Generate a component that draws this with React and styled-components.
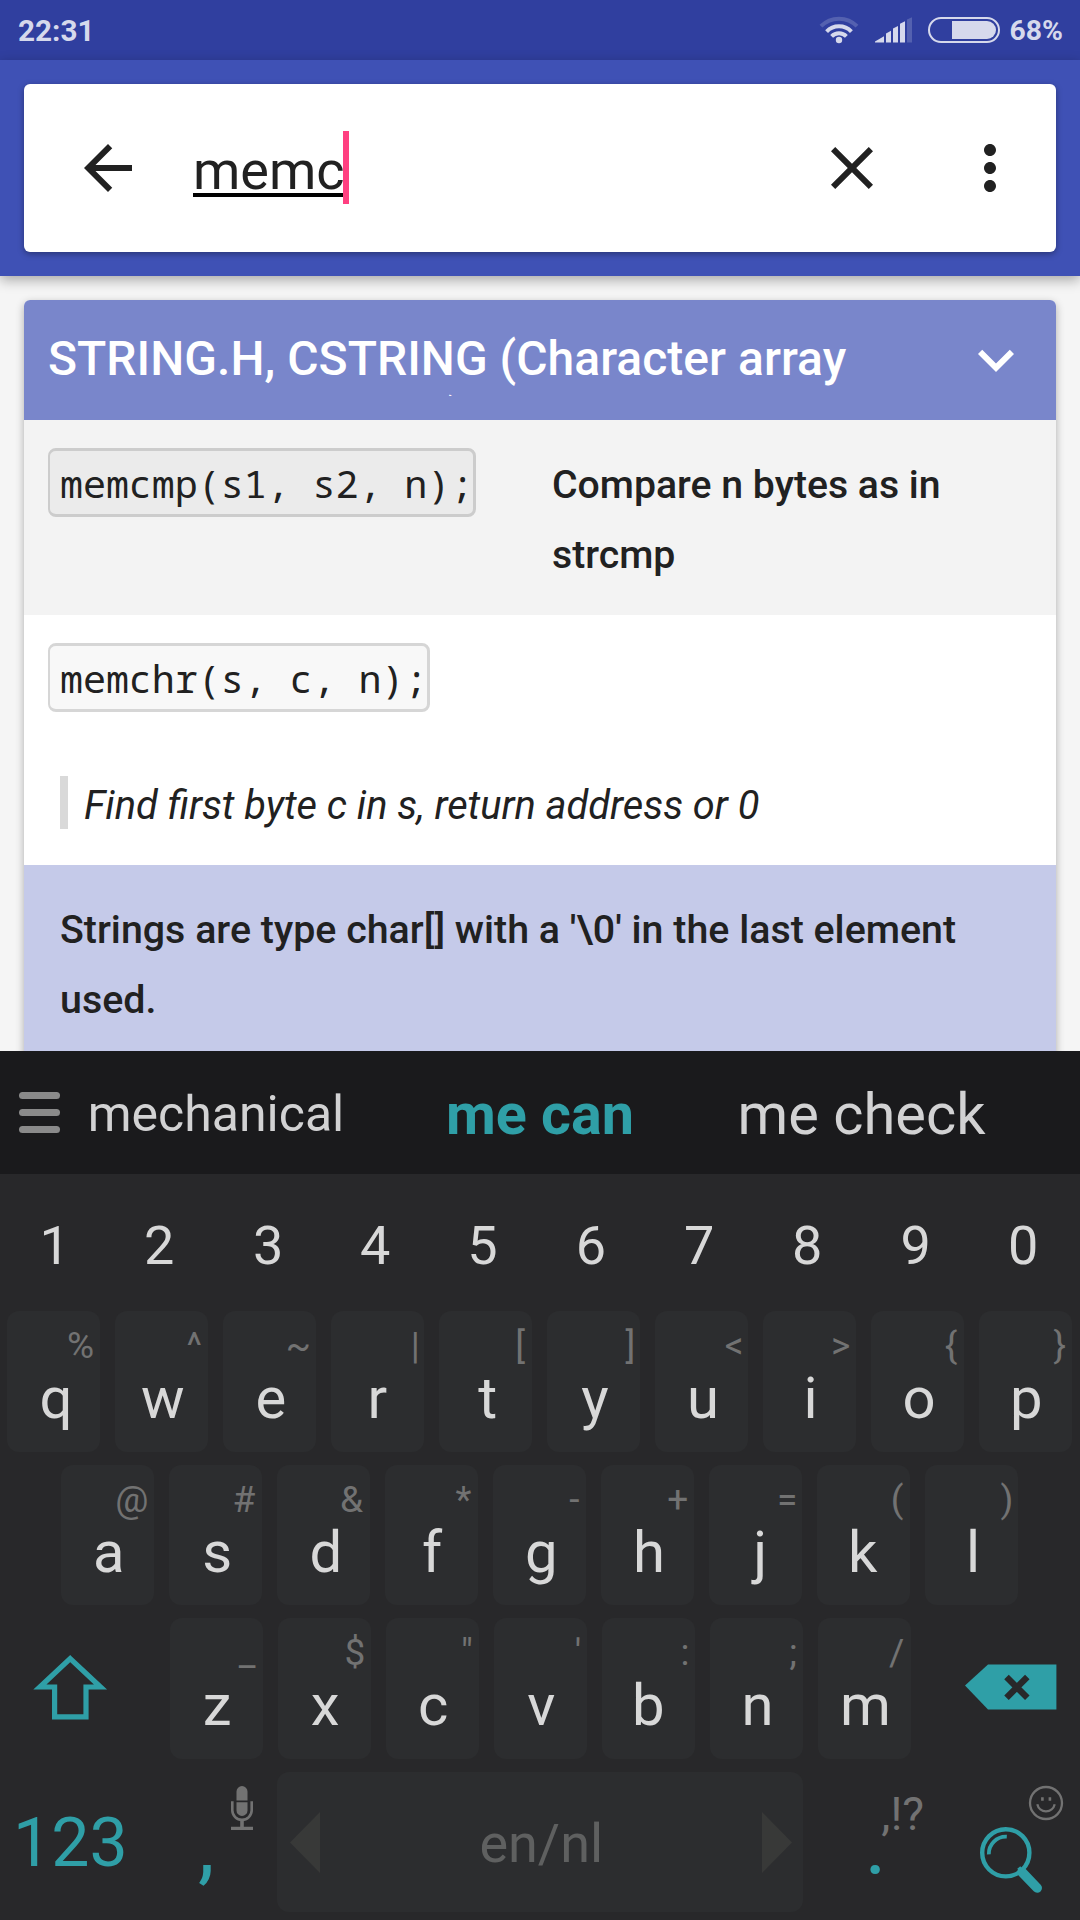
import React from "react";
import styled, { createGlobalStyle, css } from "styled-components";

const TEAL = "#2f9fa7";
const HINT = "#727272";

const GlobalStyle = createGlobalStyle`
  *, *::before, *::after { box-sizing: border-box; }
  body {
    margin: 0;
    background: #f5f5f5;
    font-family: Roboto, "Liberation Sans", sans-serif;
  }
  svg { display: block; flex: none; }
`;

const Screen = styled.div`
  width: 1080px;
  height: 1920px;
  display: flex;
  flex-direction: column;
  overflow: hidden;
`;

/* ---------- status bar ---------- */

const StatusBar = styled.header`
  flex: none;
  height: 60px;
  padding: 0 17px 0 18px;
  display: flex;
  align-items: center;
  background: #303f9f;
  color: #d6d9ec;
  font-weight: 700;
`;

const Clock = styled.span`
  flex: 1;
  font-size: 29.7px;
  line-height: 58px;
  padding-top: 2px;
`;

const StatusIcons = styled.div`
  display: flex;
  align-items: center;
  gap: 16px;
`;

const Battery = styled.div`
  width: 72px;
  height: 26px;
  padding: 2px;
  border: 2px solid #d6d9ec;
  border-radius: 13px;
  display: flex;
  justify-content: flex-end;
`;

const Charge = styled.div`
  width: 44px;
  height: 18px;
  border-radius: 0 9px 9px 0;
  background: #d6d9ec;
`;

const Percent = styled.span`
  font-size: 28.3px;
  line-height: 58px;
  padding-top: 2px;
  margin-left: -6.4px;
`;

/* ---------- app bar ---------- */

const AppBar = styled.div`
  flex: none;
  height: 216px;
  padding: 24px;
  background: #3f51b5;
  box-shadow: 0 4px 12px rgba(0, 0, 0, 0.32);
  z-index: 1;
`;

const SearchCard = styled.div`
  height: 168px;
  padding: 0 30px 0 48px;
  display: flex;
  align-items: center;
  border-radius: 6px;
  background: #fff;
  box-shadow: 0 2px 6px rgba(0, 0, 0, 0.35);
`;

const Field = styled.div`
  flex: 1;
  margin-left: 49px;
  height: 74px;
  display: flex;
  align-items: center;
`;

const Query = styled.span`
  color: #212121;
  font-size: 54px;
  line-height: 74px;
  padding-top: 5px;
  text-decoration: underline #000;
  text-decoration-thickness: 4px;
  text-underline-offset: 4px;
  text-decoration-skip-ink: none;
`;

const Caret = styled.span`
  width: 6px;
  height: 73px;
  margin: 0 0 1px -2px;
  background: #ff4081;
`;

const Actions = styled.div`
  display: flex;
  gap: 66px;
`;

/* ---------- content ---------- */

const Content = styled.main`
  flex: none;
  height: 775px;
  padding: 24px 24px 0;
  overflow: hidden;
  background: #f5f5f5;
`;

const Card = styled.section`
  height: 800px;
  border-radius: 6px;
  background: #fff;
  overflow: hidden;
`;

const CardShadow = styled.div`
  border-radius: 6px;
  box-shadow: 0 3px 8px rgba(0, 0, 0, 0.3);
`;

const CardHeader = styled.div`
  height: 120px;
  padding: 24px;
  display: flex;
  background: #7986cb;
`;

const Title = styled.h2`
  flex: 1;
  height: 72px;
  margin: 0;
  padding-top: 5.5px;
  overflow: hidden;
  color: #fff;
  font-size: 48px;
  font-weight: 500;
  letter-spacing: 0.03px;
  line-height: 58px;
`;

const ROW_TONES = { grey: "#f3f3f3", white: "#ffffff", indigo: "#c5cae9" };

const Row = styled.div`
  height: ${(p) => p.$height}px;
  padding: 28px 24px 0;
  background: ${(p) => ROW_TONES[p.$tone]};
  color: #212121;
  font-size: 39.3px;
  line-height: 70px;
`;

const Split = styled.div`
  display: grid;
  grid-template-columns: 504px 1fr;
  align-items: start;
`;

const Code = styled.code`
  display: inline-block;
  justify-self: start;
  height: 69px;
  padding: 1px 0 0 10px;
  border: 3px solid ${(p) => (p.$dark ? "#cccccc" : "#d6d6d6")};
  border-left-width: 2px;
  border-radius: 8px;
  background: ${(p) => (p.$dark ? "#ebebeb" : "#f8f8f8")};
  color: #212121;
  font-family: "Noto Sans Mono", "DejaVu Sans Mono", monospace;
  font-size: 38.4px;
  letter-spacing: -0.08px;
  line-height: 63px;
`;

const Meaning = styled.div`
  padding-top: 2px;
  font-size: 39.2px;
  font-weight: 500;
`;

const Quote = styled.blockquote`
  height: 53px;
  margin: 64px 0 0 12px;
  padding-left: 16px;
  border-left: 8px solid #d9d9d9;
  font-size: 39.77px;
  font-style: italic;
  line-height: 59px;
`;

const Note = styled.div`
  padding: 2px 0 0 12px;
  font-size: 39.37px;
  font-weight: 500;
`;

/* ---------- keyboard ---------- */

const Keyboard = styled.div`
  flex: 1;
  display: flex;
  flex-direction: column;
  background: #28282a;
  color: #d8d8d8;
  z-index: 2;
`;

const Suggestions = styled.div`
  flex: none;
  height: 123px;
  padding-left: 19px;
  display: flex;
  align-items: center;
  background: #1a1a1c;
`;

const Burger = styled.div`
  width: 41px;
  height: 41px;
  margin-bottom: 1px;
  display: flex;
  flex-direction: column;
  justify-content: space-between;
`;

const BurgerLine = styled.span`
  height: 7px;
  border-radius: 3.5px;
  background: #8a8a8a;
`;

const Suggestion = styled.span`
  width: ${(p) => p.$width}px;
  padding-top: 3px;
  text-align: center;
  font-size: 57.8px;
  line-height: 120px;
  color: #d2d2d3;
  ${(p) => p.$small && css`font-size: 50px; padding-left: 1px;`}
  ${(p) => p.$primary && css`padding-top: 5px; font-size: 57.5px; font-weight: 700; color: ${TEAL};`}
`;

const Digits = styled.div`
  flex: none;
  height: 137.3px;
  display: grid;
  grid-template-columns: repeat(10, 1fr);
`;

const Digit = styled.span`
  padding: 6px 5.4px 0 0;
  text-align: center;
  font-size: 54px;
  line-height: 131px;
`;

const KeyRow = styled.div`
  flex: none;
  height: 140.7px;
  margin-bottom: 12.8px;
  padding-left: ${(p) => p.$inset}px;
  display: flex;
  gap: 15px;
`;

const Key = styled.div`
  flex: none;
  width: ${(p) => p.$width || 93}px;
  height: 140.7px;
  border-radius: 12px;
  display: flex;
  flex-direction: column;
  background: ${(p) => (p.$plain ? "transparent" : "#2c2d2f")};
`;

const KeyHint = styled.span`
  align-self: flex-end;
  padding: 5px 7px 0 0;
  color: ${HINT};
  font-size: 37px;
  line-height: 60px;
`;

const KeyLabel = styled.span`
  padding-left: 2.7px;
  text-align: center;
  font-size: 58px;
  line-height: 44px;
`;

const ShiftKey = styled.div`
  width: 147.5px;
  padding: 36px 0 0 26px;
`;

const DeleteKey = styled.div`
  padding: 46px 0 0 39px;
`;

const ModeKey = styled.div`
  width: 154px;
  padding: 3px 0 0 6px;
  color: ${TEAL};
  font-size: 68px;
  line-height: 136px;
`;

const MicHint = styled.div`
  align-self: flex-end;
  padding: 14px 9px 0 0;
`;

const MarkHint = styled.span`
  align-self: flex-end;
  padding-top: 20px;
  margin-right: -13.5px;
  color: ${HINT};
  font-size: 46px;
  line-height: 44px;
`;

const Mark = styled.span`
  padding-left: ${(p) => p.$left}px;
  color: ${TEAL};
  font-size: 84px;
  line-height: ${(p) => p.$line}px;
`;

const SpaceKey = styled.div`
  flex: none;
  width: 525.5px;
  height: 140.7px;
  padding: 1px 10px 0 13px;
  border-radius: 12px;
  display: flex;
  align-items: center;
  justify-content: space-between;
  background: #2c2d2f;
  color: #5f6060;
  font-size: 54px;
`;

const SpaceLabel = styled.span`
  padding-top: 2px;
`;

const EnterKey = styled.div`
  margin-left: 38px;
  width: 104px;
  padding-top: 13.5px;
  display: flex;
  flex-direction: column;
`;

const Smile = styled.div`
  align-self: flex-end;
  margin-right: 4px;
`;

const Search = styled.div`
  margin: 5px 0 0 15px;
`;

const pen = document.createElement("canvas").getContext("2d");

function measure(char) {
  pen.font = "400px Roboto";
  const m = pen.measureText(char);
  return {
    right: (m.width - m.actualBoundingBoxRight) / 400,
    left: -m.actualBoundingBoxLeft / 400,
  };
}

/* Blank space a glyph carries on its right, so that every hint ends on the same edge. */
const rightBearing = (char, size) => measure(char).right * size;

/* Extra indent that puts the drawn glyph, not its advance box, in the middle of the key. */
function opticalIndent(char, size) {
  const { left, right } = measure(char);
  return (right - left) * size;
}

function CenteredGlyph({ as: Part, char, size }) {
  const shift = opticalIndent(char, size) / 2;
  return <Part style={{ transform: `translateX(${shift.toFixed(2)}px)` }}>{char}</Part>;
}

function LetterKey({ label, hint }) {
  return (
    <Key>
      <KeyHint style={{ marginRight: -rightBearing(hint, 37) }}>{hint}</KeyHint>
      <CenteredGlyph as={KeyLabel} char={label} size={58} />
    </Key>
  );
}

const TOP = [["q", "%"], ["w", "^"], ["e", "~"], ["r", "|"], ["t", "["], ["y", "]"], ["u", "<"], ["i", ">"], ["o", "{"], ["p", "}"]];
const HOME = [["a", "@"], ["s", "#"], ["d", "&"], ["f", "*"], ["g", "-"], ["h", "+"], ["j", "="], ["k", "("], ["l", ")"]];
const BOTTOM = [["z", "_"], ["x", "$"], ["c", '"'], ["v", "'"], ["b", ":"], ["n", ";"], ["m", "/"]];

const letters = (row) => row.map(([label, hint]) => <LetterKey key={label} label={label} hint={hint} />);

const MaterialIcon = ({ d, color = "#212121" }) => (
  <svg width="72" height="72" viewBox="0 0 24 24" fill={color}>
    <path d={d} />
  </svg>
);

const BACK = "M20 11H7.83l5.59-5.59L12 4l-8 8 8 8 1.41-1.41L7.83 13H20v-2z";
const CLOSE = "M19 6.41L17.59 5 12 10.59 6.41 5 5 6.41 10.59 12 5 17.59 6.41 19 12 13.41 17.59 19 19 17.59 13.41 12z";
const MORE = "M12 8c1.1 0 2-.9 2-2s-.9-2-2-2-2 .9-2 2 .9 2 2 2zm0 2c-1.1 0-2 .9-2 2s.9 2 2 2 2-.9 2-2-.9-2-2-2zm0 6c-1.1 0-2 .9-2 2s.9 2 2 2 2-.9 2-2-.9-2-2-2z";
const EXPAND = "M7.41 8.59L12 13.17l4.59-4.58L18 10l-6 6-6-6z";

const WifiIcon = () => (
  <svg width="40" height="30" viewBox="9 15 40 30" fill="none" stroke="#d6d9ec" strokeWidth="4">
    <path d="M11 26.2a25.2 25.2 0 0 1 36 0" strokeOpacity="0.22" />
    <path d="M16.6 31.6a17.3 17.3 0 0 1 24.8 0" />
    <path d="M21.6 36.4a10.4 10.4 0 0 1 14.8 0" />
    <circle cx="29" cy="40" r="3.2" fill="#d6d9ec" stroke="none" />
  </svg>
);

const SignalIcon = () => (
  <svg width="37" height="26" viewBox="66 17.5 37 26" fill="#d6d9ec">
    <path d="M66 43v-1l9-5.3V43z" />
    <path d="M77 43v-9l5-2.8V43z" />
    <path d="M84 43V29l5-2.6V43z" />
    <path d="M91 43V24.3l5-2.6V43z" />
    <path d="M98 43V20l5-2.3V43z" fillOpacity="0.22" />
  </svg>
);

const ShiftIcon = () => (
  <svg width="75" height="67" viewBox="0 0 75 67" fill="none" stroke={TEAL} strokeWidth="5.2">
    <path d="M37.2 4.6L67.5 33H53v29.8H21.6V33H6.9z" />
  </svg>
);

const DeleteIcon = () => (
  <svg width="92" height="46" viewBox="0 0 92 46">
    <path d="M0 21.6L23 .5H91.4V45.4H23z" fill={TEAL} />
    <path d="M41.5 13l20.8 20.8M62.3 13L41.5 33.8" stroke="#28282a" strokeWidth="6.4" />
  </svg>
);

const MicIcon = () => (
  <svg width="22" height="44" viewBox="0 0 22 44" fill={HINT}>
    <path d="M5.5 14.4V5.6a5.5 5.5 0 0 1 11 0v8.8zM5.5 16.2h11v8.2a5.5 5.5 0 0 1-11 0z" />
    <path d="M1.3 15.2v9a9.7 9.7 0 0 0 19.4 0v-9" fill="none" stroke={HINT} strokeWidth="2.6" />
    <path d="M9.2 33.5h3.6v7.3h9.2V44H0v-3.2h9.2z" />
  </svg>
);

const Triangle = ({ d }) => (
  <svg width="30" height="61" viewBox="0 0 30 61" fill="#383938">
    <path d={d} />
  </svg>
);

const SmileIcon = () => (
  <svg width="36" height="36" viewBox="0 0 36 36" fill="none" stroke={HINT} strokeWidth="2.3">
    <circle cx="18" cy="18" r="16" />
    <path d="M9.3 19.3a8.9 8.9 0 0 0 17.4 0" />
    <path d="M14.4 12.2v3.6M21.9 12.2v3.6" strokeWidth="2.6" />
  </svg>
);

const SearchIcon = () => (
  <svg width="66" height="68" viewBox="0 0 66 68" fill="none" stroke={TEAL}>
    <circle cx="26.8" cy="26.8" r="23.6" strokeWidth="4.4" />
    <path d="M9.8 28.4a17.2 17.2 0 0 1 18-17.8" strokeWidth="3.8" />
    <path d="M40.5 45.5L43.5 43" strokeWidth="7" />
    <path d="M43 46.2L58.2 62" strokeWidth="9.6" strokeLinecap="round" />
  </svg>
);

export default function App() {
  return (
    <Screen>
      <GlobalStyle />
      <StatusBar>
        <Clock>22:31</Clock>
        <StatusIcons>
          <WifiIcon />
          <SignalIcon />
          <Battery>
            <Charge />
          </Battery>
          <Percent>68%</Percent>
        </StatusIcons>
      </StatusBar>

      <AppBar>
        <SearchCard>
          <MaterialIcon d={BACK} />
          <Field>
            <Query>memc</Query>
            <Caret />
          </Field>
          <Actions>
            <MaterialIcon d={CLOSE} />
            <MaterialIcon d={MORE} />
          </Actions>
        </SearchCard>
      </AppBar>

      <Content>
        <CardShadow>
          <Card>
            <CardHeader>
              <Title>
                STRING.H, CSTRING (Character array
                <br />
                handling functions)
              </Title>
              <MaterialIcon d={EXPAND} color="#fff" />
            </CardHeader>
            <Row $tone="grey" $height={195}>
              <Split>
                <Code $dark>memcmp(s1, s2, n);</Code>
                <Meaning>
                  Compare n bytes as in
                  <br />
                  strcmp
                </Meaning>
              </Split>
            </Row>
            <Row $tone="white" $height={250}>
              <Split>
                <Code>memchr(s, c, n);</Code>
              </Split>
              <Quote>Find first byte c in s, return address or 0</Quote>
            </Row>
            <Row $tone="indigo" $height={235}>
              <Note>Strings are type char[] with a '\0' in the last element used.</Note>
            </Row>
          </Card>
        </CardShadow>
      </Content>

      <Keyboard>
        <Suggestions>
          <Burger>
            <BurgerLine />
            <BurgerLine />
            <BurgerLine />
          </Burger>
          <Suggestion $width={311} $small>mechanical</Suggestion>
          <Suggestion $width={338} $primary>me can</Suggestion>
          <Suggestion $width={305}>me check</Suggestion>
        </Suggestions>
        <Digits>
          {[..."1234567890"].map((d) => (
            <CenteredGlyph key={d} as={Digit} char={d} size={54} />
          ))}
        </Digits>
        <KeyRow $inset={7}>{letters(TOP)}</KeyRow>
        <KeyRow $inset={61}>{letters(HOME)}</KeyRow>
        <KeyRow $inset={7}>
          <ShiftKey>
            <ShiftIcon />
          </ShiftKey>
          {letters(BOTTOM)}
          <DeleteKey>
            <DeleteIcon />
          </DeleteKey>
        </KeyRow>
        <KeyRow $inset={7}>
          <ModeKey>123</ModeKey>
          <Key $plain $width={86}>
            <MicHint>
              <MicIcon />
            </MicHint>
            <Mark $left={22} $line={32}>,</Mark>
          </Key>
          <SpaceKey>
            <Triangle d="M30 0v61L0 30.5z" />
            <SpaceLabel>en/nl</SpaceLabel>
            <Triangle d="M0 0v61l30-30.5z" />
          </SpaceKey>
          <Key $plain>
            <MarkHint>,!?</MarkHint>
            <Mark $left={47} $line={20}>.</Mark>
          </Key>
          <EnterKey>
            <Smile>
              <SmileIcon />
            </Smile>
            <Search>
              <SearchIcon />
            </Search>
          </EnterKey>
        </KeyRow>
      </Keyboard>
    </Screen>
  );
}
